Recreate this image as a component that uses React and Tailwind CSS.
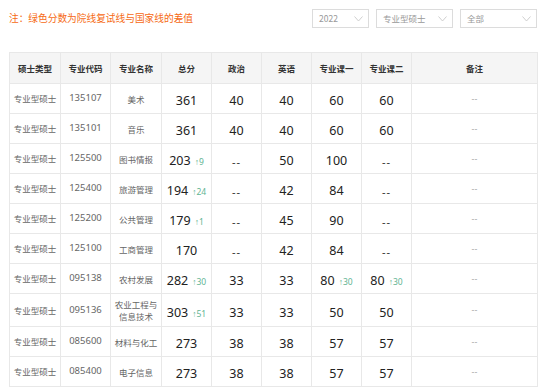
import React from "react";

const rows = [
  { code: "135107", name: ["美术"], total: "361", zz: "40", yy: "40", k1: "60", k2: "60" },
  { code: "135101", name: ["音乐"], total: "361", zz: "40", yy: "40", k1: "60", k2: "60" },
  { code: "125500", name: ["图书情报"], total: "203", td: "↑9", zz: "--", yy: "50", k1: "100", k2: "--" },
  { code: "125400", name: ["旅游管理"], total: "194", td: "↑24", zz: "--", yy: "42", k1: "84", k2: "--" },
  { code: "125200", name: ["公共管理"], total: "179", td: "↑1", zz: "--", yy: "45", k1: "90", k2: "--" },
  { code: "125100", name: ["工商管理"], total: "170", zz: "--", yy: "42", k1: "84", k2: "--" },
  { code: "095138", name: ["农村发展"], total: "282", td: "↑30", zz: "33", yy: "33", k1: "80", k1d: "↑30", k2: "80", k2d: "↑30" },
  { code: "095136", name: ["农业工程与", "信息技术"], total: "303", td: "↑51", zz: "33", yy: "33", k1: "50", k2: "50", tall: true },
  { code: "085600", name: ["材料与化工"], total: "273", zz: "38", yy: "38", k1: "57", k2: "57" },
  { code: "085400", name: ["电子信息"], total: "273", zz: "38", yy: "38", k1: "57", k2: "57" },
];

const headers = ["硕士类型", "专业代码", "专业名称", "总分", "政治", "英语", "专业课一", "专业课二", "备注"];
const widths = ["w-[51px]", "w-[50px]", "w-[51px]", "w-[50px]", "w-[50px]", "w-[50px]", "w-[50px]", "w-[50px]", "w-[126px]"];

const Chevron = () => (
  <svg width="9" height="6" viewBox="0 0 9 6" fill="none">
    <polyline points="0.5,0.5 4.5,5 8.5,0.5" stroke="#c8c8c8" strokeWidth="0.9" />
  </svg>
);

const Select = ({ label, w }) => (
  <div className={`flex items-center justify-between h-[19px] border border-[#dcdcdc] pl-[6px] pr-[5px] text-[8.5px] text-[#999] ${w}`}>
    <span>{label}</span>
    <Chevron />
  </div>
);

const Score = ({ v, d }) => {
  if (v === "--") return <span className="text-[11px] text-[#333] tracking-[1px] font-['Noto_Sans']">--</span>;
  return (
    <span className="inline-flex items-baseline gap-[4px] font-['Noto_Sans']">
      <span className="text-[12.5px] text-[#222]">{v}</span>
      {d && <span className="text-[8.5px] text-[#5fb493]">{d}</span>}
    </span>
  );
};

export default function App() {
  return (
    <div className="w-[545px] h-[392px] bg-white overflow-hidden" style={{ fontFamily: '"Noto Sans CJK SC", "Noto Sans", sans-serif' }}>
      <div className="flex items-center justify-between pl-[9px] pr-[8px] pt-[9px]">
        <div className="text-[9.7px] text-[#f66a14] leading-[19px]">注：绿色分数为院线复试线与国家线的差值</div>
        <div className="flex gap-[7px]">
          <Select label="2022" w="w-[57px]" />
          <Select label="专业型硕士" w="w-[77px]" />
          <Select label="全部" w="w-[77px]" />
        </div>
      </div>

      <table className="ml-[9px] mt-[24px] w-[528px] table-fixed border-collapse text-center">
        <thead>
          <tr className="bg-[#f5f5f5]">
            {headers.map((h, i) => (
              <th key={h} className={`${widths[i]} h-[31px] border border-[#e8e8e8] text-[8.5px] font-bold text-[#333]`}>
                {h}
              </th>
            ))}
          </tr>
        </thead>
        <tbody>
          {rows.map((r) => (
            <tr key={r.code} className={r.tall ? "h-[33px]" : "h-[30px]"}>
              <td className="border border-[#e8e8e8] text-[8.5px] text-[#666]">专业型硕士</td>
              <td className="border border-[#e8e8e8] text-[9.5px] text-[#666] font-['Noto_Sans']">{r.code}</td>
              <td className="border border-[#e8e8e8] text-[8.5px] text-[#666] leading-[12px]">
                {r.name.map((n) => (
                  <div key={n}>{n}</div>
                ))}
              </td>
              <td className="border border-[#e8e8e8]"><Score v={r.total} d={r.td} /></td>
              <td className="border border-[#e8e8e8]"><Score v={r.zz} /></td>
              <td className="border border-[#e8e8e8]"><Score v={r.yy} /></td>
              <td className="border border-[#e8e8e8]"><Score v={r.k1} d={r.k1d} /></td>
              <td className="border border-[#e8e8e8]"><Score v={r.k2} d={r.k2d} /></td>
              <td className="border border-[#e8e8e8] text-[9px] text-[#aaa] font-['Noto_Sans']">--</td>
            </tr>
          ))}
        </tbody>
      </table>
    </div>
  );
}
